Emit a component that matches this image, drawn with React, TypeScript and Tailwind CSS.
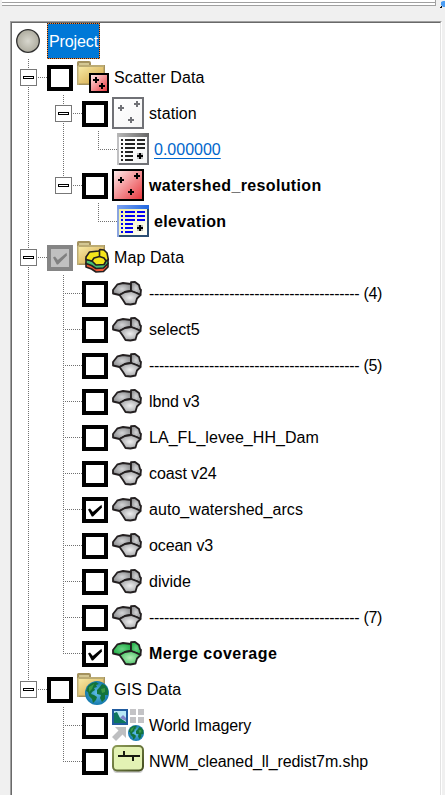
import React from "react";

type IconKind =
  | "folderScatter" | "folderMap" | "folderGis" | "station" | "scatter"
  | "dataGray" | "dataBlue" | "coverage" | "coverageActive" | "imagery" | "shape";
type Guide = "none" | "line" | "tee" | "corner" | "box" | "boxLast";
interface Item {
  guides: Guide[];
  check?: "off" | "on" | "mixed";
  icon: IconKind;
  label: string;
  text?: string;
}

const vDots = "bg-[repeating-linear-gradient(180deg,#707070_0px,#707070_1px,#fff_1px,#fff_2px)]";
const hDots = "bg-[repeating-linear-gradient(90deg,#707070_0px,#707070_1px,#fff_1px,#fff_2px)]";

const cov = (label: string, text = "", check: "off" | "on" = "off"): Item => ({
  guides: ["line", "tee"], check, icon: "coverage", label, text,
});
const dashes = "-".repeat(42);

const items: Item[] = [
  { guides: ["box"], check: "off", icon: "folderScatter", label: "Scatter Data", text: "tracking-[0.14px]" },
  { guides: ["line", "box"], check: "off", icon: "station", label: "station", text: "tracking-[0.1px]" },
  { guides: ["line", "line", "corner"], icon: "dataGray", label: "0.000000", text: "text-[#0066cc] underline underline-offset-[3px] decoration-1" },
  { guides: ["line", "boxLast"], check: "off", icon: "scatter", label: "watershed_resolution", text: "font-bold tracking-[0.36px]" },
  { guides: ["line", "none", "corner"], icon: "dataBlue", label: "elevation", text: "font-bold tracking-[0.34px]" },
  { guides: ["box"], check: "mixed", icon: "folderMap", label: "Map Data", text: "tracking-[0.1px]" },
  cov(dashes + " (4)", "tracking-[-0.32px]"),
  cov("select5"),
  cov(dashes + " (5)", "tracking-[-0.32px]"),
  cov("lbnd v3", "tracking-[-0.15px]"),
  cov("LA_FL_levee_HH_Dam", "tracking-[0.05px]"),
  cov("coast v24", "tracking-[-0.1px]"),
  cov("auto_watershed_arcs", "tracking-[0.05px]", "on"),
  cov("ocean v3", "tracking-[-0.1px]"),
  cov("divide"),
  cov(dashes + " (7)", "tracking-[-0.32px]"),
  { guides: ["line", "corner"], check: "on", icon: "coverageActive", label: "Merge coverage", text: "font-bold tracking-[0.46px]" },
  { guides: ["boxLast"], check: "off", icon: "folderGis", label: "GIS Data", text: "tracking-[0.2px]" },
  { guides: ["none", "tee"], check: "off", icon: "imagery", label: "World Imagery", text: "tracking-[-0.12px]" },
  { guides: ["none", "corner"], check: "off", icon: "shape", label: "NWM_cleaned_ll_redist7m.shp", text: "tracking-[-0.09px]" },
];

function GuideCell({ kind }: { kind: Guide }) {
  const box = kind === "box" || kind === "boxLast";
  if (kind === "none") return <div className="h-9 w-[35px] shrink-0" />;
  return (
    <div className="grid h-9 w-[35px] shrink-0 grid-cols-[16px_1px_18px] grid-rows-[18px_1px_17px]">
      <div className={`col-start-2 row-start-1 ${vDots}`} />
      {kind !== "corner" && kind !== "boxLast" && <div className={`col-start-2 row-start-2 row-span-2 ${vDots}`} />}
      {kind !== "line" && <div className={`col-start-2 col-span-2 row-start-2 ${hDots}`} />}
      {box && (
        <div className="z-10 col-span-3 col-start-1 row-span-3 row-start-1 ml-2 mt-[10px] flex h-[17px] w-[17px] items-center justify-center border border-[#777] bg-white">
          <div className="h-[3px] w-[11px] border border-black bg-white" />
        </div>
      )}
    </div>
  );
}

function Check({ state }: { state: "off" | "on" | "mixed" }) {
  const mixed = state === "mixed";
  return (
    <div className={`mt-1.5 mr-1 flex h-[26px] w-[26px] shrink-0 items-center justify-center border-4 ${mixed ? "border-[#858585] bg-[#c0c0c0]" : "border-black bg-white"}`}>
      {state !== "off" && (
        <svg width="18" height="18" viewBox="0 0 18 18">
          <path d="M2 8.5 L4 7.5 L6.8 11 L15.5 3.8 L16 6.5 L7 15.5 L5.8 15.5 Z" fill={mixed ? "#808080" : "#000"} />
        </svg>
      )}
    </div>
  );
}

const Plus = ({ x, y, c = "#000" }: { x: number; y: number; c?: string }) => (
  <path d={`M${x - 3} ${y - 1}h2v-2h2v2h2v2h-2v2h-2v-2h-2z`} fill={c} shapeRendering="crispEdges" />
);

function Folder() {
  return (
    <g>
      <path d="M0 3V1.5Q0 0 1.5 0H12Q14 0 14 2V4H28V24H0Z" fill="#a4925e" />
      <path d="M1.5 6H26.5V22.5H1.5Z" fill="url(#folderFill)" />
      <path d="M2 2H12V4H2Z" fill="#d3c793" />
      <path d="M1 24V5H27" fill="none" stroke="#f4e7a8" strokeWidth="1" opacity=".6" />
    </g>
  );
}

function Globe({ cx, cy, r }: { cx: number; cy: number; r: number }) {
  return (
    <g transform={`translate(${cx} ${cy}) scale(${r / 12})`}>
      <circle r="12" fill="url(#globeFill)" />
      <path d="M-9-7L-5-10-1-11 2-9-1-8 0-6-3-5-2-3-5-1-6 1-3 2 0 4-1 7-4 10-5 6-8 3-9-1-11-2Z M2-5L5-9 8-8 11-4 11 2 8 2 8 6 5 9 3 5 4 2 0 1 0-3Z" fill="#13733b" />
      <path d="M-8-6L-3-9-5-4-8-1Z M4-4L8-5 8-1 5 0Z" fill="#3d9a46" />
    </g>
  );
}

function Coverage({ green = false }: { green?: boolean }) {
  const f = green ? "url(#covGreen)" : "url(#covGray)";
  const g = green ? "url(#covGreen2)" : "url(#covGray2)";
  return (
    <g stroke="#231f20" strokeWidth="1.8" strokeLinejoin="round">
      <path d="M1 13L5.5 7.3 11 6 19 7V14L13 15 7.5 18 1 16.5Z" fill={f} />
      <path d="M19 14V5.2L23 5 27 8 28 12 29 13 28.5 18 24.5 16Z" fill={f} />
      <path d="M7.5 18L13 15 19 14 24.5 16 28.5 18 25 21.5 23.5 26.5 18.5 27.5 13.5 27 11 23Z" fill={g} />
    </g>
  );
}

function DataIcon({ blue = false }: { blue?: boolean }) {
  const c = blue ? "#0000f5" : "#242424";
  return (
    <g shapeRendering="crispEdges">
      <path d="M0 0H32V32H0Z" fill={blue ? "#2c4e72" : "#707176"} />
      <path d="M0 0H2V32H0Z" fill={blue ? "#8aa4e0" : "#c0c0c2"} />
      <path d="M0 0H32V4H0Z" fill={blue ? "url(#titleBlue)" : "url(#titleGray)"} />
      <path d="M2 4H30V30H2Z" fill={blue ? "url(#paperBlue)" : "url(#paper)"} />
      {[6, 10, 14, 18, 22, 26].map((y, i) => (
        <path key={y} d={`M4 ${y}h2v2h-2z M8 ${y}h${i < 3 ? 10 : 8}v2h-${i < 3 ? 10 : 8}z${i < 3 ? ` M20 ${y}h8v2h-8z` : ""}`} fill={c} />
      ))}
      <path d="M20 20H26V26H20Z" fill="#bbb" />
      <Plus x={23} y={23} />
    </g>
  );
}

function Icon({ kind }: { kind: IconKind }) {
  return (
    <svg className="mt-0.5 shrink-0 overflow-visible" width="32" height="32" viewBox="0 0 32 32">
      {kind.startsWith("folder") && <Folder />}
      {kind === "folderScatter" && (
        <g>
          <path d="M13 13H31V31H13Z" fill="url(#redFill)" stroke="#000" strokeWidth="2" />
          <Plus x={19} y={19} /><Plus x={25} y={25} />
        </g>
      )}
      {kind === "folderMap" && (
        <g stroke="#231f20" strokeWidth="1.6" strokeLinejoin="round">
          <path d="M9 22L15 23 31 22 31 26 26.5 30.5 19 31 14.5 28 9 26Z" fill="#ef5937" />
          <path d="M9 18L15 20 31 18 31 22.5 26.5 27 19 27.5 14.5 24.5 9 22.5Z" fill="#45bd72" />
          <path d="M9 16L12.5 11 22 10 23 8.5 27 9 30 12 31.3 18.5 29 20 27 23.5 19 24 15 20 9 18.5Z" fill="#f5e51b" />
          <path d="M22.5 9.5V15.5L17 17 15 20M22.5 15.5L27 17 29 20" fill="none" />
        </g>
      )}
      {kind === "folderGis" && <Globe cx={20} cy={20} r={12} />}
      {(kind === "station" || kind === "scatter") && (
        <g>
          <path d="M1 1H31V31H1Z" fill={kind === "station" ? "url(#paper)" : "url(#redFill)"} stroke={kind === "station" ? "#707176" : "#000"} strokeWidth="2" />
          {[[9, 11], [25, 7], [19, 23]].map(([x, y]) => <Plus key={x} x={x} y={y} c={kind === "station" ? "#707176" : "#000"} />)}
        </g>
      )}
      {kind === "dataGray" && <DataIcon />}
      {kind === "dataBlue" && <DataIcon blue />}
      {kind === "coverage" && <Coverage />}
      {kind === "coverageActive" && <Coverage green />}
      {kind === "imagery" && (
        <g>
          <path d="M1 1H15V15H1Z" fill="#b9e9f6" stroke="#215b9e" strokeWidth="2" />
          <path d="M2 4L5 3 8 9 14 13V14H2Z" fill="#0d775e" />
          <path d="M8 9L11 6 14 9V12Z" fill="#8084c8" />
          <path d="M18 0H24V6H18Z M26 0H32V6H26Z M18 8H24V14H18Z M26 8H32V14H26Z" fill="#c3c3c6" />
          <path d="M3 18H14V29L10.5 25.5 4 32 0 28 6.5 21.5Z" fill="#bebfc1" />
          <Globe cx={24} cy={24} r={8} />
        </g>
      )}
      {kind === "shape" && (
        <g>
          <rect x="1" y="4" width="30" height="24" rx="4" fill="#ccc" />
          <rect x="1" y="1" width="30" height="24.5" rx="4" fill="#e3f2b4" stroke="url(#shapeEdge)" strokeWidth="2" />
          <path d="M6 11H28M12 6V11M21 11V16" fill="none" stroke="#171a10" strokeWidth="2" />
        </g>
      )}
    </svg>
  );
}

function Gradients() {
  const lin = (id: string, a: string, b: string, x2 = 1, y2 = 1) => (
    <linearGradient id={id} x1="0" y1="0" x2={x2} y2={y2}><stop stopColor={a} /><stop offset="1" stopColor={b} /></linearGradient>
  );
  const rad = (id: string, a: string, b: string) => (
    <radialGradient id={id}><stop stopColor={a} /><stop offset="1" stopColor={b} /></radialGradient>
  );
  return (
    <svg className="absolute h-0 w-0">
      <defs>
        {lin("folderFill", "#f7e9a5", "#d2a443")}
        {lin("redFill", "#fff0ef", "#e83239")}
        {lin("paper", "#ffffff", "#f6f6f6")}
        {lin("paperBlue", "#eff0a5", "#ffffff")}
        {lin("titleGray", "#b8b8b8", "#666666", 1, 0)}
        {lin("titleBlue", "#7ba1ef", "#2168e0", 1, 0)}
        {lin("shapeEdge", "#8d9b57", "#434d20")}
        {rad("covGray", "#d4d5d7", "#929395")}
        {rad("covGray2", "#eeeeef", "#a5a6a8")}
        {rad("covGreen", "#6bd286", "#27b24b")}
        {rad("covGreen2", "#b5edb9", "#50c76b")}
        {rad("globeFill", "#62c0ea", "#1479ad")}
        {rad("sphere", "#d8d7ce", "#aeac9f")}
      </defs>
    </svg>
  );
}

export default function App() {
  return (
    <div className="relative flex h-[795px] w-[445px] flex-col overflow-hidden bg-[#f0f0f0] font-['Liberation_Sans',Arial,sans-serif] text-[16px] leading-[38px] text-black">
      <Gradients />
      <div className="ml-0.5 h-[3px] w-[434px] shrink-0 border-b border-r border-[#a0a0a0] bg-white" />
      <div className="ml-0.5 h-[3px] w-[434px] shrink-0 border-b border-r border-[#a0a0a0] bg-white" />
      <svg className="absolute right-0 top-0" width="5" height="9" viewBox="0 0 5 9">
        <path d="M1 2L3 1H5V7H3L1 5Z" fill="#4a9cf2" /><path d="M0 8V7H1V6H2V8Z" fill="#111" />
      </svg>
      <div className="ml-[10px] mt-[15px] h-[774px] w-[432px] shrink-0 border-l border-r border-t border-l-[#a0a0a0] border-r-white border-t-[#a0a0a0]">
        <div className="h-full border-l border-r border-t border-l-[#696969] border-r-[#e3e3e3] border-t-[#696969] bg-white">
          <div className="flex h-9">
            <svg className="mt-1.5 ml-1 shrink-0" width="24" height="24" viewBox="0 0 24 24">
              <circle cx="12" cy="12" r="11.3" fill="url(#sphere)" stroke="#303030" strokeWidth="1.3" />
            </svg>
            <div className="ml-[7px] h-9 w-[53px] bg-[repeating-conic-gradient(#ff8728_0_25%,#10203a_0_50%)] bg-[length:2px_2px] p-px">
              <div className="h-full bg-[#0078d7] pl-px leading-9 tracking-[-0.1px] text-white">Project</div>
            </div>
          </div>
          {items.map((item, i) => (
            <div key={i} className="flex h-9 whitespace-pre">
              {item.guides.map((g, k) => <GuideCell key={k} kind={g} />)}
              {item.check && <Check state={item.check} />}
              <Icon kind={item.icon} />
              <span className={`ml-[5px] ${item.text ?? ""}`}>{item.label}</span>
            </div>
          ))}
        </div>
      </div>
    </div>
  );
}
